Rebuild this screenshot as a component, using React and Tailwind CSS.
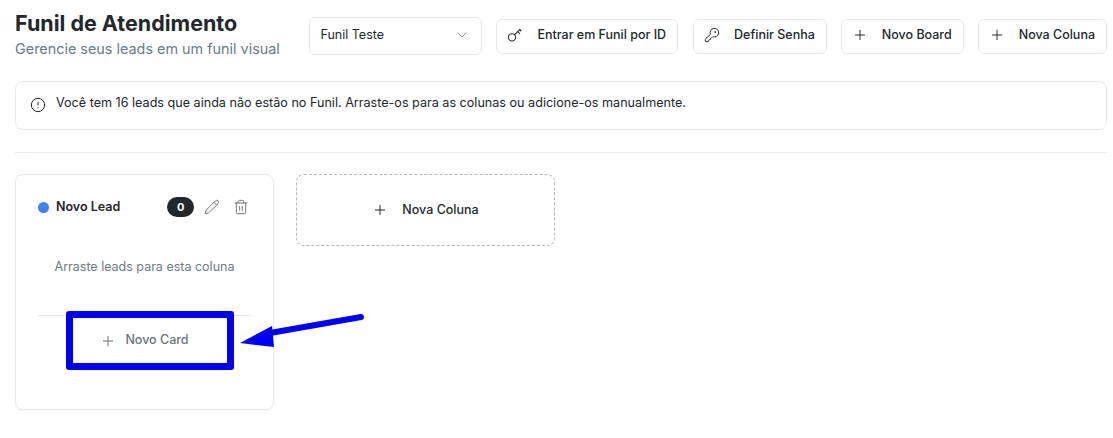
import { ChevronDown, KeyRound, Plus, Pencil, Trash2, CircleAlert } from "lucide-react";

const FONT = "font-['Inter',sans-serif]";

function ToolButton({ icon: Icon, label, className = "" }) {
  return (
    <button
      type="button"
      className={`h-[35px] pl-[10px] pr-[11px] pb-[2px] flex items-center gap-[14px] bg-white border border-[#e4ebeb] rounded-[6px] text-[12.5px] font-medium text-[#22282b] whitespace-nowrap ${className}`}
    >
      <Icon className="w-[16px] h-[16px] text-[#2b3134]" strokeWidth={1.5} />
      {label}
    </button>
  );
}

// lucide's "key" icon is close but the head is on the other side in the reference
function KeyIcon({ className }) {
  return (
    <svg className={className} viewBox="0 0 24 24" fill="none" stroke="currentColor" strokeWidth={1.6} strokeLinecap="round" strokeLinejoin="round">
      <circle cx="7.5" cy="15.5" r="5.5" />
      <path d="m11.5 11.5 8-8" />
      <path d="m16 7 3 3" />
      <path d="m19 4 2 2" />
    </svg>
  );
}

function Column() {
  return (
    <div className="relative w-[259px] h-[236px] shrink-0 bg-white border border-[#e4ebeb] rounded-[8px] shadow-[0_1px_2px_rgba(0,0,0,0.04)] px-[22px]">
      <div className="h-[64px] flex items-center">
        <span className="w-[11px] h-[11px] rounded-full bg-[#3b82f6] mr-[7px]" />
        <span className="text-[12.5px] font-semibold text-[#1e2528]">Novo Lead</span>
        <span className="ml-[47px] w-[27px] h-[20px] rounded-full bg-[#22282b] text-white text-[11px] font-bold flex items-center justify-center">0</span>
        <Pencil className="ml-[10px] w-[16px] h-[16px] text-[#6f777b]" strokeWidth={1.5} />
        <Trash2 className="ml-[13px] w-[16px] h-[16px] text-[#6f777b]" strokeWidth={1.5} />
      </div>
      <p className="mt-[19px] text-center text-[12.5px] text-[#6d7a85]">Arraste leads para esta coluna</p>
      <div className="mt-[38px] border-t border-[#e4ebeb]" />
      <div className="h-[50px] flex items-center justify-center gap-[9px] text-[12.5px] font-medium text-[#6d7378]">
        <Plus className="w-[16px] h-[16px]" strokeWidth={1.5} />
        Novo Card
      </div>
    </div>
  );
}

export default function App() {
  return (
    <div className={`${FONT} relative w-[1113px] h-[438px] bg-white overflow-hidden pl-[15px] pr-[6px] pt-[11px]`}>
      <header className="flex items-start justify-between h-[44px]">
        <div>
          <h1 className="text-[21.5px] leading-[25px] font-bold text-[#22282b]">Funil de Atendimento</h1>
          <p className="mt-[3px] text-[14.4px] leading-[20px] text-[#6d7a85]">Gerencie seus leads em um funil visual</p>
        </div>
        <div className="flex items-center gap-[14px] pt-[6px]">
          <div className="w-[173px] h-[38px] pl-[10px] pr-[11px] pb-[2px] flex items-center justify-between bg-white border border-[#e4ebeb] rounded-[6px] text-[12.5px] text-[#22282b]">
            Funil Teste
            <ChevronDown className="w-[16px] h-[16px] text-[#8a9296]" strokeWidth={1.5} />
          </div>
          <ToolButton icon={KeyIcon} label="Entrar em Funil por ID" className="mr-[1px]" />
          <ToolButton icon={KeyRound} label="Definir Senha" />
          <ToolButton icon={Plus} label="Novo Board" />
          <ToolButton icon={Plus} label="Nova Coluna" />
        </div>
      </header>

      <div className="mt-[26px] h-[49px] px-[14px] pb-[2px] flex items-center gap-[10px] bg-white border border-[#e4ebeb] rounded-[8px] text-[12.6px] text-[#22282b]">
        <CircleAlert className="w-[16px] h-[16px]" strokeWidth={1.5} />
        <span className="mb-[2px]">Você tem 16 leads que ainda não estão no Funil. Arraste-os para as colunas ou adicione-os manualmente.</span>
      </div>

      <div className="mt-[22px] border-t border-[#e4ebeb]" />

      <div className="mt-[21px] flex items-start gap-[22px]">
        <Column />
        <div className="w-[259px] h-[72px] flex items-center justify-center gap-[14px] border border-dashed border-[#b4b8ba] rounded-[8px] text-[12.5px] font-medium text-[#22282b]">
          <Plus className="w-[16px] h-[16px]" strokeWidth={1.5} />
          Nova Coluna
        </div>
      </div>

      {/* annotation drawn over the screenshot */}
      <div className="absolute left-[66px] top-[311px] w-[168px] h-[59px] border-[7px] border-[#0000f5] rounded-[3px]" />
      <svg className="absolute left-[235px] top-[310px]" width="135" height="40" viewBox="0 0 135 40" fill="none">
        <path d="M126 7 L35 23" stroke="#0000f5" strokeWidth="6" strokeLinecap="round" />
        <path d="M5 33 L37 16 L39 37 Z" fill="#0000f5" />
      </svg>
    </div>
  );
}
